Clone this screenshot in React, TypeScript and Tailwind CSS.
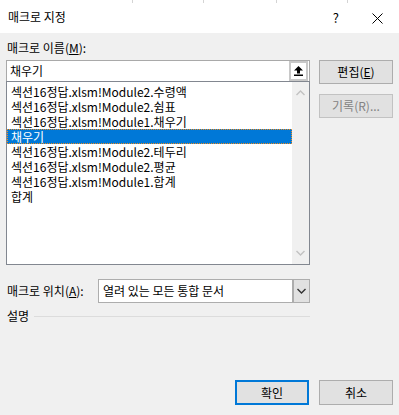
const FONT = "font-['Malgun_Gothic','Noto_Sans_CJK_KR',sans-serif]";

const macros = [
  '섹션16정답.xlsm!Module2.수령액',
  '섹션16정답.xlsm!Module2.쉼표',
  '섹션16정답.xlsm!Module1.채우기',
  '채우기',
  '섹션16정답.xlsm!Module2.테두리',
  '섹션16정답.xlsm!Module2.평균',
  '섹션16정답.xlsm!Module1.합계',
  '합계',
];

function Chevron({ up = false, color = '#c2c2c2' }: { up?: boolean; color?: string }) {
  return (
    <svg width="9" height="6" viewBox="0 0 9 6">
      <path
        d={up ? 'M0.5 5 L4.5 1 L8.5 5' : 'M0.5 1 L4.5 5 L8.5 1'}
        fill="none"
        stroke={color}
        strokeWidth={1.4}
      />
    </svg>
  );
}

export default function App() {
  const selected = 3;

  return (
    <div className={`w-[399px] h-[415px] overflow-hidden bg-[#f0f0f0] text-[12px] text-black ${FONT}`}>
      {/* sheet grid peeking above the dialog */}
      <div className="h-[3px] bg-white flex">
        <div className="w-[133px] border-r border-[#d4d4d4]" />
        <div className="w-[71px] border-r border-[#d4d4d4]" />
        <div className="w-[73px] border-r border-[#d4d4d4]" />
        <div className="w-[71px] border-r border-[#d4d4d4]" />
      </div>

      {/* title bar */}
      <div className="h-[30px] bg-white flex items-center">
        <span className="pl-[8px] leading-[14px] -mt-[2px]">매크로 지정</span>
        <span className="ml-auto mr-[33px] text-[13px] leading-[14px]">?</span>
        <svg width="11" height="11" viewBox="0 0 11 11" className="mr-[16px]">
          <path d="M0.5 0.5 L10.5 10.5 M10.5 0.5 L0.5 10.5" stroke="#000" strokeWidth={1} />
        </svg>
      </div>

      <div className="px-[6px]">
        <div className="mt-[8px] pl-[1px] leading-[14px]">
          매크로 이름(<span className="underline">M</span>):
        </div>

        <div className="mt-[5px] flex">
          <div className="w-[304px]">
            {/* name input */}
            <div className="h-[22px] bg-white border border-[#a9a9a9] flex items-center">
              <span className="pl-[3px] leading-[14px]">채우기</span>
              <div className="ml-auto mr-[1px] w-[19px] h-[20px] bg-[#c8c8c8] p-[2px]">
                <div className="w-full h-full bg-white flex items-center justify-center">
                  <svg width="9" height="10" viewBox="0 0 9 10">
                    <path d="M4.5 0 L9 4.5 L6 4.5 L6 7.5 L3 7.5 L3 4.5 L0 4.5 Z" fill="#000" />
                    <rect x="0" y="8.5" width="9" height="1.5" fill="#000" />
                  </svg>
                </div>
              </div>
            </div>

            {/* macro list */}
            <div className="h-[184px] -mt-px bg-white border border-[#828790] flex">
              <div className="flex-1 pt-[2px]">
                {macros.map((m, i) => (
                  <div
                    key={i}
                    className={
                      i === selected
                        ? 'h-[15px] leading-[13px] pl-[3px] overflow-hidden bg-[#0078d7] text-white border border-dotted border-[#f08c1e]'
                        : 'h-[15px] leading-[15px] pl-[4px] overflow-hidden'
                    }
                  >
                    {m}
                  </div>
                ))}
              </div>
              <div className="w-[17px] bg-[#f0f0f0] flex flex-col items-center justify-between py-[8px]">
                <Chevron up />
                <Chevron />
              </div>
            </div>
          </div>

          {/* side buttons */}
          <div className="ml-[9px] flex flex-col gap-[10px]">
            <div className="w-[74px] h-[24px] bg-[#e1e1e1] border border-[#adadad] flex items-center justify-center leading-[14px]">
              편집(<span className="underline">E</span>)
            </div>
            <div className="w-[74px] h-[24px] bg-[#e1e1e1] border border-[#c2c2c2] flex items-center justify-center leading-[14px] text-[#838383]">
              기록(R)...
            </div>
          </div>
        </div>

        {/* location */}
        <div className="mt-[14px] flex items-center w-[304px]">
          <span className="pl-[1px] leading-[14px]">
            매크로 위치(<span className="underline">A</span>):
          </span>
          <div className="ml-auto w-[212px] h-[24px] bg-white border border-[#adadad] flex items-center">
            <span className="pl-[4px] leading-[14px]">열려 있는 모든 통합 문서</span>
            <div className="ml-auto w-[17px] h-full bg-[#e1e1e1] border-l-2 border-[#adadad] flex items-center justify-center">
              <Chevron color="#333" />
            </div>
          </div>
        </div>

        {/* description */}
        <div className="mt-[6px] flex items-center w-[304px] h-[14px]">
          <span className="pl-[1px] leading-[14px]">설명</span>
          <div className="ml-[5px] flex-1 border-t border-[#dcdcdc]" />
        </div>

        {/* ok / cancel */}
        <div className="mt-[57px] flex justify-end gap-[10px]">
          <div className="w-[74px] h-[25px] bg-[#e1e1e1] border-2 border-[#0078d7] flex items-center justify-center leading-[14px]">
            확인
          </div>
          <div className="w-[74px] h-[25px] bg-[#e1e1e1] border border-[#adadad] flex items-center justify-center leading-[14px]">
            취소
          </div>
        </div>
      </div>
    </div>
  );
}
